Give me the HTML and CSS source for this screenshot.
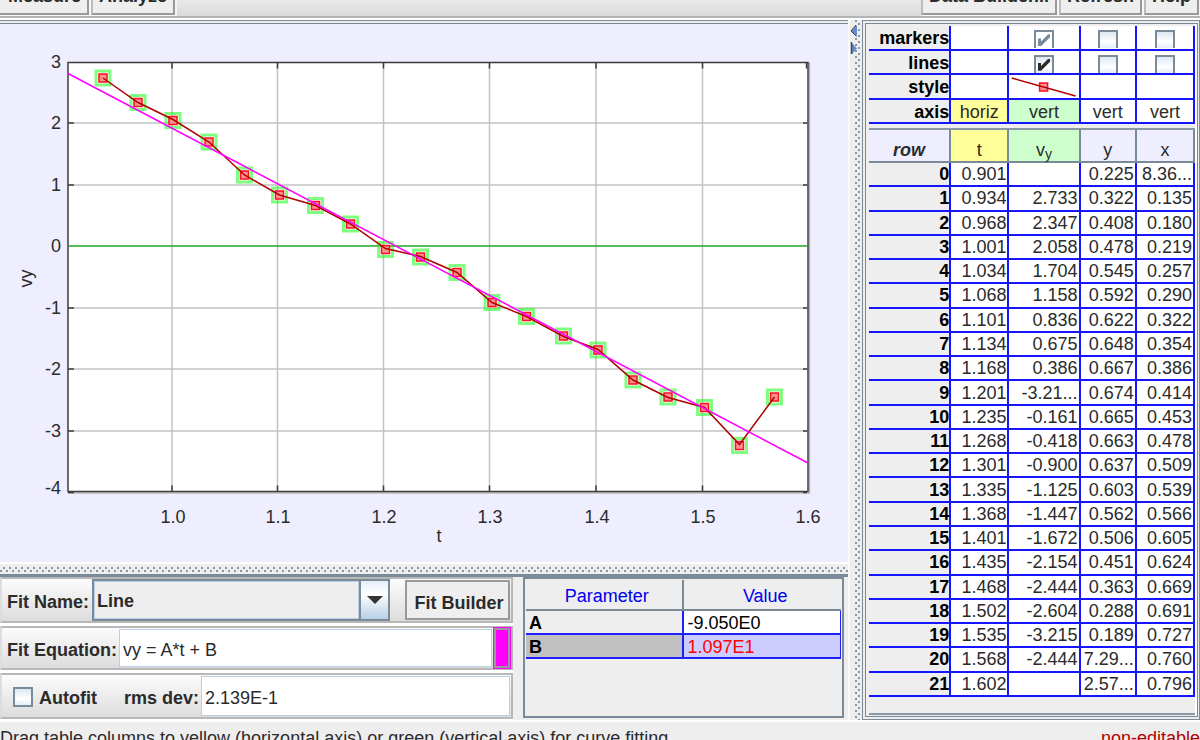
FILE: index.html
```
<!DOCTYPE html>
<html lang="en">
<head>
<meta charset="utf-8">
<title>Data Tool</title>
<link rel="stylesheet" href="styles.css">
</head>
<body>
<div class="app">
  <header class="toolbar">
    <div class="group"><button type="button" class="tool first">Measure</button><button type="button" class="tool">Analyze</button></div>
    <div class="group"><button type="button" class="tool">Data Builder...</button><button type="button" class="tool">Refresh</button><button type="button" class="tool last">Help</button></div>
  </header>

  <main class="workspace">
    <section class="left">
      <div class="plot">
        <svg class="chart" viewBox="0 24 848 537" role="img" aria-label="vy versus t with linear fit">
          <defs>
            <g id="pt">
              <rect x="-7" y="-7" width="14" height="14" fill="none" stroke="#00ff00" stroke-opacity=".5" stroke-width="3"/>
              <rect x="-4" y="-4" width="8" height="8" fill="#ff9090" stroke="#fa1020" stroke-width="1.5"/>
            </g>
          </defs>
          <rect x="68" y="62" width="740" height="429" fill="#fff"/>
          <path class="grid" d="M172 62V491M277.500 62V491M383.500 62V491M489.500 62V491M596 62V491M702.500 62V491M68 122.500H808M68 184.500H808M68 307.500H808M68 368.500H808M68 430.500H808"/>
          <path class="shade" d="M68 492.500H809.500V62"/>
          <rect class="frame" x="68" y="62" width="740" height="429"/>
          <path class="frame" d="M172 62v6M277.500 62v6M383.500 62v6M489.500 62v6M596 62v6M702.500 62v6M172 491v-6M277.500 491v-6M383.500 491v-6M489.500 491v-6M596 491v-6M702.500 491v-6M68 122.500h6M68 184.500h6M68 307.500h6M68 368.500h6M68 430.500h6M807 122.500h-4M807 184.500h-4M807 307.500h-4M807 368.500h-4M807 430.500h-4M68 492h6M807 492h-4M806.500 62v6"/>
          <path class="zero" d="M69 245.500H807"/>
          <g>
            <use href="#pt" x="103" y="77.500"/><use href="#pt" x="138" y="102"/><use href="#pt" x="173" y="120"/><use href="#pt" x="209" y="141.500"/>
            <use href="#pt" x="244.500" y="174.500"/><use href="#pt" x="279.500" y="194.500"/><use href="#pt" x="315.500" y="205"/><use href="#pt" x="350.500" y="223.500"/>
            <use href="#pt" x="385.500" y="249"/><use href="#pt" x="420.500" y="256.500"/><use href="#pt" x="457" y="272"/><use href="#pt" x="492" y="302"/>
            <use href="#pt" x="526.500" y="316"/><use href="#pt" x="563.500" y="335.500"/><use href="#pt" x="598" y="349.500"/><use href="#pt" x="633" y="379.500"/>
            <use href="#pt" x="668" y="396.500"/><use href="#pt" x="704.500" y="407"/><use href="#pt" x="739.500" y="445"/><use href="#pt" x="774.500" y="396.500"/>
          </g>
          <polyline class="data-line" points="103,77.500 138,102 173,119 209,141.500 244.500,174.500 279.500,194.500 315.500,205 350.500,223.500 385.500,248 420.500,256 457,272 492,302 526.500,316 563.500,336 598,349 633,379.500 668,397 704.500,407 739.500,444 774.500,396.500"/>
          <path class="fit-line" d="M68 73L808 462.500"/>
          <g class="tick-y">
            <text x="61" y="67">3</text><text x="61" y="128">2</text><text x="61" y="190">1</text><text x="61" y="251">0</text>
            <text x="61" y="313">-1</text><text x="61" y="374">-2</text><text x="61" y="436">-3</text><text x="61" y="493">-4</text>
          </g>
          <g class="tick-x">
            <text x="173" y="522">1.0</text><text x="278" y="522">1.1</text><text x="384" y="522">1.2</text><text x="490" y="522">1.3</text>
            <text x="597" y="522">1.4</text><text x="703" y="522">1.5</text><text x="808" y="522">1.6</text><text x="439" y="541">t</text>
            <text transform="translate(32 278) rotate(-90)">vy</text>
          </g>
        </svg>
      </div>
      <div class="hsplit"></div>
      <div class="bottom">
        <form class="fit">
          <div class="fit-row">
            <label for="fitname">Fit Name:</label>
            <div class="combo"><select id="fitname"><option>Line</option></select><span class="arrow"></span></div>
            <button type="button" class="builder">Fit Builder</button>
          </div>
          <div class="fit-row">
            <label for="eq">Fit Equation:</label>
            <input id="eq" class="field" type="text" value="vy = A*t + B">
            <button type="button" class="swatch" aria-label="Fit color"></button>
          </div>
          <div class="fit-row">
            <input id="auto" class="check autofit" type="checkbox"><label for="auto">Autofit</label>
            <label for="rms" class="rms">rms dev:</label>
            <input id="rms" class="field" type="text" value="2.139E-1" readonly>
          </div>
        </form>
        <div class="params">
          <table class="param-table">
            <thead><tr><th>Parameter</th><th>Value</th></tr></thead>
            <tbody>
              <tr><td class="pname">A</td><td>-9.050E0</td></tr>
              <tr class="selected"><td class="pname">B</td><td>1.097E1</td></tr>
            </tbody>
          </table>
        </div>
      </div>
    </section>

    <div class="vsplit">
      <svg class="arrows" viewBox="0 0 8 32" aria-hidden="true">
        <path d="M7 1V13L1 7Z" fill="#6688cc"/><path d="M6 1L1 7L6 12" fill="none" stroke="#444"/>
        <path d="M2 19V30L7 24.500Z" fill="#6688cc"/><path d="M1.500 18V30" stroke="#444" stroke-width="1.500"/>
      </svg>
    </div>

    <aside class="right">
      <div class="panel">
        <table class="grid-table props">
          <colgroup><col class="c0"><col class="c1"><col class="c2"><col class="c3"><col class="c4"></colgroup>
          <tbody>
            <tr><th>markers</th><td></td><td><input class="check cut" type="checkbox" aria-label="markers vy" checked disabled></td><td><input class="check cut" type="checkbox" aria-label="markers y"></td><td><input class="check cut" type="checkbox" aria-label="markers x"></td></tr>
            <tr><th>lines</th><td></td><td><input class="check cut" type="checkbox" aria-label="lines vy" checked></td><td><input class="check cut" type="checkbox" aria-label="lines y"></td><td><input class="check cut" type="checkbox" aria-label="lines x"></td></tr>
            <tr><th>style</th><td></td><td><svg class="style-icon" viewBox="0 0 66 20" aria-hidden="true"><rect x="29" y="6" width="8" height="8" fill="#ff9090" stroke="#fa1020" stroke-width="1.500"/><path d="M1 1L65 19" stroke="#b00000" stroke-width="1.500"/></svg></td><td></td><td></td></tr>
            <tr><th>axis</th><td class="yellow">horiz</td><td class="green">vert</td><td>vert</td><td>vert</td></tr>
          </tbody>
        </table>
        <div class="data-wrap">
          <table class="grid-table data">
            <colgroup><col class="c0"><col class="c1"><col class="c2"><col class="c3"><col class="c4"></colgroup>
            <thead><tr><th class="row-head">row</th><th class="yellow">t</th><th class="green">v<span class="sub">y</span></th><th>y</th><th>x</th></tr></thead>
            <tbody>
              <tr><th>0</th><td>0.901</td><td></td><td>0.225</td><td>8.36...</td></tr>
              <tr><th>1</th><td>0.934</td><td>2.733</td><td>0.322</td><td>0.135</td></tr>
              <tr><th>2</th><td>0.968</td><td>2.347</td><td>0.408</td><td>0.180</td></tr>
              <tr><th>3</th><td>1.001</td><td>2.058</td><td>0.478</td><td>0.219</td></tr>
              <tr><th>4</th><td>1.034</td><td>1.704</td><td>0.545</td><td>0.257</td></tr>
              <tr><th>5</th><td>1.068</td><td>1.158</td><td>0.592</td><td>0.290</td></tr>
              <tr><th>6</th><td>1.101</td><td>0.836</td><td>0.622</td><td>0.322</td></tr>
              <tr><th>7</th><td>1.134</td><td>0.675</td><td>0.648</td><td>0.354</td></tr>
              <tr><th>8</th><td>1.168</td><td>0.386</td><td>0.667</td><td>0.386</td></tr>
              <tr><th>9</th><td>1.201</td><td>-3.21...</td><td>0.674</td><td>0.414</td></tr>
              <tr><th>10</th><td>1.235</td><td>-0.161</td><td>0.665</td><td>0.453</td></tr>
              <tr><th>11</th><td>1.268</td><td>-0.418</td><td>0.663</td><td>0.478</td></tr>
              <tr><th>12</th><td>1.301</td><td>-0.900</td><td>0.637</td><td>0.509</td></tr>
              <tr><th>13</th><td>1.335</td><td>-1.125</td><td>0.603</td><td>0.539</td></tr>
              <tr><th>14</th><td>1.368</td><td>-1.447</td><td>0.562</td><td>0.566</td></tr>
              <tr><th>15</th><td>1.401</td><td>-1.672</td><td>0.506</td><td>0.605</td></tr>
              <tr><th>16</th><td>1.435</td><td>-2.154</td><td>0.451</td><td>0.624</td></tr>
              <tr><th>17</th><td>1.468</td><td>-2.444</td><td>0.363</td><td>0.669</td></tr>
              <tr><th>18</th><td>1.502</td><td>-2.604</td><td>0.288</td><td>0.691</td></tr>
              <tr><th>19</th><td>1.535</td><td>-3.215</td><td>0.189</td><td>0.727</td></tr>
              <tr><th>20</th><td>1.568</td><td>-2.444</td><td>7.29...</td><td>0.760</td></tr>
              <tr><th>21</th><td>1.602</td><td></td><td>2.57...</td><td>0.796</td></tr>
            </tbody>
          </table>
        </div>
      </div>
    </aside>
  </main>

  <footer class="status"><span>Drag table columns to yellow (horizontal axis) or green (vertical axis) for curve fitting</span><span class="warn">non-editable</span></footer>
</div>
</body>
</html>
```
FILE: styles.css
```
* { box-sizing: border-box; }
body {
  margin: 0;
  background: #eee;
  color: #2b2b2b;
  font: 18px/20px "Liberation Sans", Arial, sans-serif;
}
button, input, select { font: inherit; color: inherit; margin: 0; border-radius: 0; }
.app { display: flex; flex-direction: column; height: 100vh; overflow: hidden; }

/* toolbar */
.toolbar {
  flex: none;
  display: flex;
  justify-content: space-between;
  align-items: flex-end;
  height: 18px;
  overflow: hidden;
  background: linear-gradient(#e9e9e9, #dadada);
  border-bottom: 2px solid #b4b4b4;
}
.group { display: flex; gap: 2px; padding: 0 2px 1px 0; background: #f6f6f6; }
.group + .group { padding: 0 1px 1px 0; }
.tool {
  flex: none;
  height: 34px;
  padding: 0 6px 4px;
  font-weight: bold;
  background: #eee;
  border: 2px solid #999;
  border-left-color: #bbb;
}
.tool.first { border-left: 0; padding-left: 8px; }

/* workspace */
.workspace {
  flex: 1;
  min-height: 0;
  display: grid;
  grid-template-columns: minmax(0, 848fr) 14px minmax(0, 338fr);
  padding-top: 2px;
  background: #fff;
}
.left { display: flex; flex-direction: column; min-height: 0; background: #eee; border-top: 4px double #7a8a99; }
.plot { flex: 1; min-height: 0; background: #eeeeff; }
.chart { display: block; width: 100%; height: 100%; }
.chart text { font-size: 18px; fill: #2b2b2b; }
.tick-y { text-anchor: end; }
.tick-x { text-anchor: middle; }
.grid { stroke: #c4c4c4; stroke-width: 1.5; }
.frame { fill: none; stroke: #3c3c3c; stroke-width: 1.5; }
.shade { fill: none; stroke: #b8b8b8; stroke-width: 1.5; }
.zero { stroke: #22a822; stroke-width: 1.5; }
.data-line { fill: none; stroke: #b00000; stroke-width: 1.5; }
.fit-line { stroke: #ff00ff; stroke-width: 1.5; }

.hsplit {
  flex: none;
  height: 12px;
  border-top: 2px solid #fff;
  background:
    radial-gradient(circle at 1px 1px, #8a98a6 1px, transparent 1px) 3px 3px / 6px 8px repeat-x,
    radial-gradient(circle at 1px 1px, #8a98a6 1px, transparent 1px) 6px 6px / 6px 8px repeat-x,
    #eee;
}
.vsplit {
  padding-top: 4px;
  border-left: 2px solid #fafafa;
  background:
    radial-gradient(circle at 1px 1px, #8a98a6 1px, transparent 1px) 5px 0 / 8px 6px repeat-y,
    radial-gradient(circle at 1px 1px, #8a98a6 1px, transparent 1px) 8px 3px / 8px 6px repeat-y,
    #eee;
}
.arrows { display: block; width: 8px; height: 32px; }

/* fit controls */
.bottom {
  flex: none;
  display: grid;
  grid-template-columns: minmax(0, 513fr) minmax(0, 325fr);
  gap: 10px;
  height: 146px;
  border-top: 3px solid #7a8a99;
}
.fit { display: grid; grid-template-rows: 46px 44px 46px; gap: 3px; background: #fff; align-content: start; }
.fit-row {
  display: flex;
  align-items: center;
  gap: 2px;
  padding: 0 1px 0 5px;
  background: linear-gradient(#fcfcfc, #dcdcdc);
  border: 2px solid #b8b8b8;
  border-left-color: #ddd;
}
.fit-row label { padding-top: 4px; font-weight: bold; }
.field {
  flex: 1;
  min-width: 0;
  align-self: stretch;
  margin: 1px 0;
  padding: 4px 3px 0;
  background: #fff;
  border: 1px solid #b8cfe5;
}
.combo { flex: 1; display: flex; height: 42px; margin-left: 1px; border: 2px solid #7a8a99; }
.combo select {
  flex: 1;
  min-width: 0;
  appearance: none;
  padding: 2px 2px 0;
  font-weight: bold;
  background: #eee;
  border: 1px solid #b8cfe5;
  outline: 0;
}
.arrow {
  flex: none;
  display: grid;
  place-items: center;
  width: 29px;
  border-left: 2px solid #7a8a99;
  background: linear-gradient(#e4eef8, #fff 35%, #b8cfe5);
}
.arrow::after { content: ""; border: 8px solid transparent; border-top-color: #333; border-bottom: 0; }
.builder {
  width: 105px;
  height: 40px;
  margin-left: 13px;
  padding: 6px 0 0 3px;
  font-weight: bold;
  background: #eee;
  border: 2px solid #999;
  white-space: nowrap;
}
.swatch { width: 16px; align-self: stretch; background: #f0f; border: 2px solid #999; outline: 1px solid #f0f; }
.check {
  flex: none;
  appearance: none;
  display: inline-grid;
  place-items: center;
  width: 20px;
  height: 20px;
  border: 2px solid #7a8a99;
  background: linear-gradient(#dbe7f2, #fff 60%, #e4edf6);
}
.check:checked::after {
  content: "";
  width: 12px;
  height: 12px;
  background: #2b2b2b;
  clip-path: polygon(0 35%, 25% 35%, 25% 60%, 85% 0, 100% 0, 100% 25%, 25% 100%, 0 100%);
}
.check:disabled { background: #fff; }
.check:disabled::after { background: #7a8a99; }
.check.cut { height: 18px; border-bottom: 0; vertical-align: bottom; }
.autofit { margin: 2px 4px 0 6px; }
.rms { margin-left: 25px; }

.params { margin: 0 4px 2px 0; padding: 1px; border: 2px solid #7a8a99; }
.param-table { width: 100%; table-layout: fixed; border-spacing: 0; color: #000; }
.param-table th {
  height: 31px;
  padding: 2px 0 0 6px;
  font-weight: normal;
  color: #0000ee;
  border-right: 2px solid #7a8a99;
  border-bottom: 2px solid #7a8a99;
}
.param-table th:last-child { border-right: 0; }
.param-table td {
  height: 24px;
  padding: 2px 4px 0;
  line-height: 20px;
  background: #fff;
  border-right: 1px solid #2020ff;
  border-bottom: 2px solid #2020ff;
}
.param-table .pname { padding-left: 3px; font-weight: bold; background: #eee; border-right-width: 2px; }
.selected td { background: #ccccff; color: #f00; }
.param-table .selected .pname { background: #c0c0c0; color: #000; }

/* data panel */
.right { min-height: 0; background: #eee; border: 4px double #7a8a99; border-right-width: 3px; }
.panel { display: flex; flex-direction: column; gap: 4px; height: 100%; padding: 2px 0 1px 3px; border-right: 2px solid #fff; }
.grid-table { width: 100%; table-layout: fixed; border-spacing: 0; }
.c0 { width: 82px; }
.c1 { width: 58px; }
.c2 { width: 71px; }
.c3 { width: 56px; }
.c4 { width: 58px; }
.grid-table td, .grid-table tbody th {
  padding: 0 1px 0 0;
  height: 24px;
  line-height: 20px;
  white-space: nowrap;
  border-right: 2px solid #1515ff;
  border-bottom: 2px solid #1515ff;
}
.grid-table td { background: #fff; text-align: right; }
.grid-table tbody th { padding: 0; text-align: right; color: #000; background: #eee; }
.props { flex: none; height: 98px; }
.props td { text-align: center; }
.grid-table.props td, .grid-table.props th { padding: 2px 0 0; }
.style-icon { display: block; width: 100%; height: 20px; }
.grid-table .yellow { background: #ffff99; }
.grid-table .green { background: #ccffcc; }
.data-wrap { flex: 1; min-height: 0; overflow: hidden; border-top: 2px solid #8a98a6; border-bottom: 2px solid #8a98a6; }
.data { height: 567px; }
.data thead th {
  height: 33px;
  padding: 8px 0 0;
  font-weight: normal;
  background: #eeeeff;
  border-right: 2px solid #7a8a99;
  border-bottom: 2px solid #7a8a99;
}
.data thead .row-head { font-weight: bold; font-style: italic; }
.sub { font-size: 14px; line-height: 10px; vertical-align: -3px; }

/* status bar */
.status { flex: none; display: flex; justify-content: space-between; height: 20px; padding-top: 6px; overflow: hidden; white-space: nowrap; border-top: 2px solid #fff; }
.warn { color: #b00000; }
```
